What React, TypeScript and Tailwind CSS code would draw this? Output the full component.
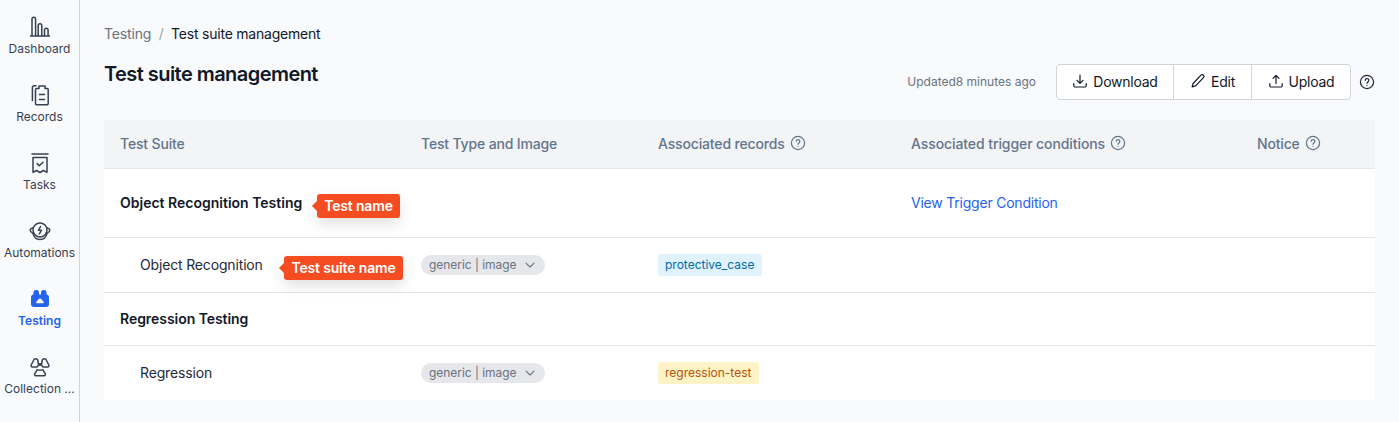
import React from "react";

const stroke = { fill: "none", stroke: "currentColor", strokeWidth: 1.5, strokeLinecap: "round" as const, strokeLinejoin: "round" as const };

function DashboardIcon() {
  return (
    <svg width="24" height="24" viewBox="0 0 24 24" {...stroke}>
      <path d="M2.500 21h19" />
      <path d="M4 20.500V4a1.800 1.800 0 0 1 3.600 0v16.500" />
      <path d="M10.200 20.500V10.500a1.800 1.800 0 0 1 3.600 0v10" />
      <path d="M16.500 20.500v-5.500a1.800 1.800 0 0 1 3.600 0v5.500" />
    </svg>
  );
}
function RecordsIcon() {
  return (
    <svg width="24" height="24" viewBox="0 0 24 24" {...stroke}>
      <path d="M8 2.700H6.200a1.800 1.800 0 0 0-1.800 1.800v13" />
      <path d="M8.500 5.500h2.500V3h6v2.500h2.200a1 1 0 0 1 1 1v14.200a1 1 0 0 1-1 1H8.500a1 1 0 0 1-1-1V6.500a1 1 0 0 1 1-1z" />
      <path d="M11.500 11.500h5M11.500 16.500h5" strokeWidth="1.600" />
    </svg>
  );
}
function TasksIcon() {
  return (
    <svg width="24" height="24" viewBox="0 0 24 24" {...stroke}>
      <path d="M4 3h16" />
      <path d="M5 6.500h14v14.800l-3.500-1.800-3.500 2-3.500-2-3.500 1.800z" />
      <path d="M9 12.500l2.200 2.200 3.800-3.500" />
    </svg>
  );
}
function AutomationsIcon() {
  return (
    <svg width="24" height="24" viewBox="0 0 24 24" {...stroke}>
      <circle cx="12" cy="11" r="7" />
      <path d="M5 8.700C3 9.400 2.200 10.300 2.200 11.200c0 1.500 1.300 2.500 2.800 3.200M19 8.700c2 .7 2.800 1.600 2.800 2.500 0 1.500-1.300 2.500-2.800 3.200" />
      <path d="M5 14.400c.8 3.500 3.600 6.100 7 6.100s6.200-2.600 7-6.100" />
      <path d="M12.600 7.500 10.500 11.200h3L11.400 14.800" />
    </svg>
  );
}
function TestingIcon() {
  return (
    <svg width="24" height="24" viewBox="0 0 24 24">
      <rect x="5.500" y="3" width="5.500" height="8" rx="2.500" fill="currentColor" />
      <rect x="13" y="3" width="5.500" height="8" rx="2.500" fill="currentColor" />
      <rect x="3" y="7.500" width="18" height="12.500" rx="3" fill="currentColor" />
      <path fill="#f9fafc" d="M8.200 15.200c0-.9.700-1.500 1.500-1.500.3-1.300 1.200-2.200 2.300-2.200s2 .9 2.300 2.200c.8 0 1.500.6 1.500 1.500 0 .6-.4 1-1 1H9.200c-.6 0-1-.4-1-1z" />
    </svg>
  );
}
function CollectionIcon() {
  return (
    <svg width="24" height="24" viewBox="0 0 24 24" {...stroke}>
      <path d="M6 4.500 3.200 10c-.5 1 .1 2 1.200 2h4.200c.8 0 1-.6 1.400-1.200.3-.4.500-.8.500-1.300L9.700 4.800C9 3.500 6.800 3.200 6 4.500z" />
      <path d="M18 4.500 20.800 10c.5 1-.1 2-1.200 2h-4.200c-.8 0-1-.6-1.400-1.200-.3-.4-.5-.8-.5-1.300l.8-4.700C15 3.500 17.200 3.200 18 4.500z" />
      <path d="M9.200 14.600c1.800.8 3.800.8 5.600 0l2.500 4.200c.5 1-.1 2-1.200 2H7.900c-1.100 0-1.700-1-1.200-2z" />
      <circle cx="12" cy="9.500" r=".7" fill="currentColor" />
    </svg>
  );
}

function Nav({ icon, label, active }: { icon: React.ReactNode; label: string; active?: boolean }) {
  return (
    <div className={`flex h-[68px] flex-col items-center tracking-normal ${active ? "text-[#2563eb] font-semibold" : "text-[#374151]"}`}>
      <div className="flex h-[24px] w-[24px] items-center justify-center">{icon}</div>
      <span className="mt-[1px] text-[12px] leading-[18px] whitespace-nowrap">{label}</span>
    </div>
  );
}

function Help({ size = 16, className = "" }: { size?: number; className?: string }) {
  return (
    <svg width={size} height={size} viewBox="0 0 16 16" fill="none" stroke="currentColor" strokeWidth="1.200" strokeLinecap="round" className={className}>
      <circle cx="8" cy="8" r="6.600" />
      <path d="M6.200 6.300a1.800 1.800 0 1 1 2.700 1.600c-.6.400-.9.700-.9 1.400" />
      <circle cx="8" cy="11.300" r=".6" fill="currentColor" stroke="none" />
    </svg>
  );
}

function Chevron() {
  return (
    <svg width="12" height="12" viewBox="0 0 12 12" fill="none" stroke="currentColor" strokeWidth="1.100" strokeLinecap="round" strokeLinejoin="round">
      <path d="M2 4.200 6 8l4-3.800" />
    </svg>
  );
}

function TypePill() {
  return (
    <span className="inline-flex h-[20px] w-[124px] items-center gap-[8px] rounded-full bg-[#e5e7eb] pl-[8px] text-[12px] tracking-[-0.05px] text-[#6b7280]">
      generic | image
      <Chevron />
    </span>
  );
}

function Tip({ children, className }: { children: React.ReactNode; className: string }) {
  return (
    <div className={`absolute flex h-[24px] items-center justify-center rounded-[3px] bg-[#f64c21] pb-[2px] text-[14px] font-semibold text-white shadow-[0_6px_14px_rgba(0,0,0,0.12)] ${className}`}>
      <span className="absolute left-[-5px] top-1/2 h-0 w-0 -translate-y-1/2 border-y-[5px] border-r-[5px] border-y-transparent border-r-[#f64c21]" />
      {children}
    </div>
  );
}

const row = "grid grid-cols-[301px_237px_253px_346px_134px] items-center border-b border-[#e5e7eb] bg-white pb-[2px]";

export default function App() {
  return (
    <div className="flex h-[422px] w-[1399px] overflow-hidden bg-[#f9fafc] font-['Inter',sans-serif] text-[14px] tracking-[-0.16px] text-[#111827]">
      <aside className="w-[80px] shrink-0 border-r border-[#d1d5db] pt-[15px]">
        <Nav icon={<DashboardIcon />} label="Dashboard" />
        <Nav icon={<RecordsIcon />} label="Records" />
        <Nav icon={<TasksIcon />} label="Tasks" />
        <Nav icon={<AutomationsIcon />} label="Automations" />
        <Nav icon={<TestingIcon />} label="Testing" active />
        <Nav icon={<CollectionIcon />} label="Collection ..." />
      </aside>
      <main className="flex min-w-0 flex-1 flex-col px-[24px] pt-[24px]">
        <div className="flex h-[20px] items-center leading-[20px]">
          <span className="text-[#6b7280]">Testing</span>
          <span className="mx-[7.5px] text-[#9ca3af]">/</span>
          <span className="tracking-[-0.22px]">Test suite management</span>
        </div>
        <div className="flex h-[76px] items-start justify-between">
          <h1 className="mt-[16px] text-[20px] font-semibold leading-[28px] tracking-[-0.55px]">Test suite management</h1>
          <div className="mt-[20px] flex items-center">
            <span className="mr-[20px] text-[12px] tracking-normal text-[#6b7280]">Updated8 minutes ago</span>
            <div className="flex h-[36px] items-center rounded-[4px] border border-[#d1d5db] bg-white tracking-[-0.25px]">
              <button className="flex h-full w-[117px] items-center justify-center gap-[5px] border-r border-[#d1d5db] pb-[2px]">
                <svg width="16" height="16" viewBox="0 0 16 16" fill="none" stroke="currentColor" strokeWidth="1.200" strokeLinecap="round" strokeLinejoin="round">
                  <path d="M8 2v8M5 7.300 8 10.300l3-3M1.800 10.500v2a1.500 1.500 0 0 0 1.500 1.500h9.400a1.500 1.500 0 0 0 1.500-1.500v-2" />
                </svg>
                Download
              </button>
              <button className="flex h-full w-[78px] items-center justify-center gap-[5px] border-r border-[#d1d5db] pb-[2px]">
                <svg width="16" height="16" viewBox="0 0 16 16" fill="none" stroke="currentColor" strokeWidth="1.200" strokeLinecap="round" strokeLinejoin="round">
                  <path d="M11 2.200a1.700 1.700 0 0 1 2.500 2.400l-8 8.300-3.400 1 1-3.400z" />
                </svg>
                Edit
              </button>
              <button className="flex h-full w-[98px] items-center justify-center gap-[5px] pb-[2px]">
                <svg width="16" height="16" viewBox="0 0 16 16" fill="none" stroke="currentColor" strokeWidth="1.200" strokeLinecap="round" strokeLinejoin="round">
                  <path d="M8 10.500V2.300M5 5.300 8 2.300l3 3M1.800 10.500v2a1.500 1.500 0 0 0 1.500 1.500h9.400a1.500 1.500 0 0 0 1.500-1.500v-2" />
                </svg>
                Upload
              </button>
            </div>
            <Help className="ml-[8px] text-[#1f2937]" />
          </div>
        </div>
        <div className="relative">
          <div className="grid h-[49px] grid-cols-[301px_237px_253px_346px_134px] items-center border-b border-[#e5e7eb] bg-[#f3f4f6] pb-[2px] font-medium text-[#64748b]">
            <span className="pl-[16px]">Test Suite</span>
            <span className="pl-[16px]">Test Type and Image</span>
            <span className="flex items-center gap-[5px] pl-[16px]">Associated records <Help /></span>
            <span className="flex items-center gap-[5px] pl-[16px] tracking-[-0.09px]">Associated trigger conditions <Help /></span>
            <span className="flex items-center gap-[5px] pl-[16px]">Notice <Help /></span>
          </div>
          <div className={`${row} h-[69px]`}>
            <span className="pl-[16px] font-semibold tracking-normal">Object Recognition Testing</span>
            <span />
            <span />
            <span className="pl-[16px] tracking-[-0.22px] text-[#2563eb]">View Trigger Condition</span>
            <span />
          </div>
          <div className={`${row} h-[55px]`}>
            <span className="pl-[36px] text-[#1f2937]">Object Recognition</span>
            <span className="pl-[16px]"><TypePill /></span>
            <span className="pl-[16px]">
              <span className="inline-flex h-[22px] items-center rounded-[3px] bg-[#e0f2fe] pl-[7px] pr-[7.5px] text-[12px] tracking-normal text-[#0369a1]">protective_case</span>
            </span>
            <span />
            <span />
          </div>
          <div className={`${row} h-[53px]`}>
            <span className="pl-[16px] font-semibold tracking-[-0.05px]">Regression Testing</span>
          </div>
          <div className={`${row} h-[54px] border-b-0`}>
            <span className="pl-[36px] text-[#1f2937]">Regression</span>
            <span className="pl-[16px]"><TypePill /></span>
            <span className="pl-[16px]">
              <span className="inline-flex h-[22px] items-center rounded-[3px] bg-[#fef3c7] pl-[7px] pr-[7.5px] text-[12px] tracking-normal text-[#b45309]">regression-test</span>
            </span>
            <span />
            <span />
          </div>
          <Tip className="left-[213px] top-[74px] w-[83px]">Test name</Tip>
          <Tip className="left-[180px] top-[136px] w-[119px]">Test suite name</Tip>
        </div>
      </main>
    </div>
  );
}
